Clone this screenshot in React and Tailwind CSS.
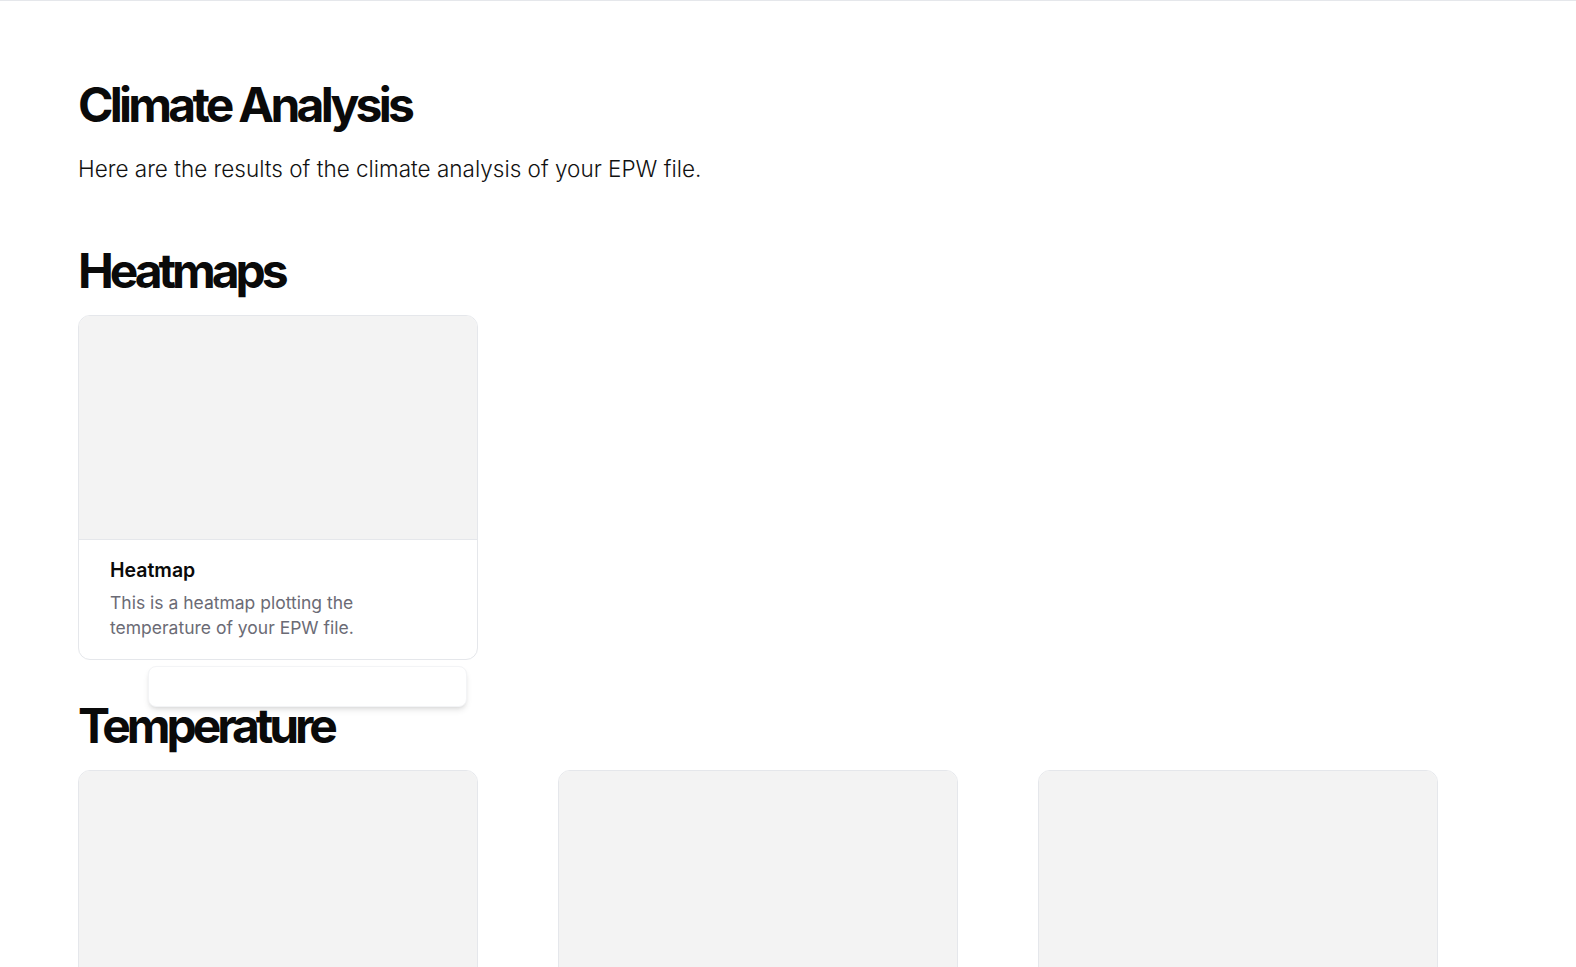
import React from "react";

function Card({ title, desc, children }) {
  return (
    <div className="relative">
      <div className="w-[400px] rounded-xl border border-gray-200 bg-white overflow-hidden">
        <div className="h-[224px] bg-[#f3f3f3] border-b border-gray-200"></div>
        {title && (
          <div className="px-[31px] pt-4 pb-[19px]">
            <h3 className="text-[19.5px] leading-[28px] font-semibold text-[#0a0a0a]">{title}</h3>
            <p className="mt-[6px] max-w-[300px] text-[17.5px] leading-[25px] text-[#6b6b75]">{desc}</p>
          </div>
        )}
      </div>
      {children}
    </div>
  );
}

export default function App() {
  return (
    <div className="min-h-screen bg-white border-t border-gray-200 font-['Inter',sans-serif] text-[#0a0a0a]">
      <div className="px-[78px] pt-[80px]">
        <h1 className="text-5xl font-bold tracking-[-0.078em]">Climate Analysis</h1>
        <p className="mt-6 text-[22.5px] leading-[32px] font-light text-[#111]">
          Here are the results of the climate analysis of your EPW file.
        </p>

        <h2 className="mt-[62px] text-5xl font-bold tracking-[-0.085em]">Heatmaps</h2>
        <div className="mt-5 grid grid-cols-[repeat(3,400px)] gap-x-20">
          <Card
            title="Heatmap"
            desc="This is a heatmap plotting the temperature of your EPW file."
          >
            <div className="absolute left-[70px] top-[calc(100%+6px)] w-[319px] h-[41px] rounded-lg border border-gray-100 bg-white shadow-md"></div>
          </Card>
        </div>

        <h2 className="mt-[42px] text-5xl font-bold tracking-[-0.085em]">Temperature</h2>
        <div className="mt-5 grid grid-cols-[repeat(3,400px)] gap-x-20">
          <Card />
          <Card />
          <Card />
        </div>
      </div>
    </div>
  );
}
